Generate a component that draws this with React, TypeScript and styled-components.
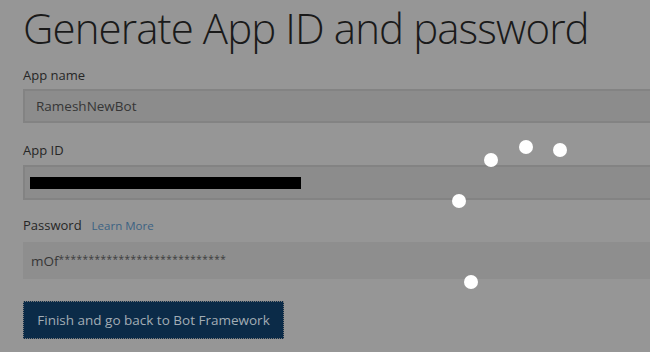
import React from "react";
import styled, { createGlobalStyle } from "styled-components";

const Global = createGlobalStyle`
  html, body { margin: 0; padding: 0; background: #969696; }
  body { font-family: "Open Sans", "Noto Sans", sans-serif; overflow: hidden; }
  * { box-sizing: border-box; }
`;

const Page = styled.div`
  position: relative;
  width: 650px;
  height: 352px;
  overflow: hidden;
  background: #969696;
`;

const Form = styled.div`
  display: flex;
  flex-direction: column;
  padding-left: 23px;
  width: 700px;
`;

const Title = styled.h1`
  margin: 0;
  font-weight: 300;
  font-size: 42px;
  line-height: 56px;
  color: #1a1a1a;
  letter-spacing: -0.9px;
  white-space: nowrap;
`;

const LabelRow = styled.div<{ $top: number }>`
  display: flex;
  align-items: baseline;
  gap: 10px;
  margin-top: ${(p) => p.$top}px;
  height: 18px;
`;

const Label = styled.span`
  font-size: 13px;
  line-height: 18px;
  color: #262626;
`;

const Link = styled.span`
  font-size: 11.5px;
  color: #3b6283;
`;

const Input = styled.div<{ $top: number; $h: number; $bordered?: boolean }>`
  display: flex;
  align-items: center;
  margin-top: ${(p) => p.$top}px;
  height: ${(p) => p.$h}px;
  padding-left: ${(p) => (p.$bordered ? 11 : 8)}px;
  background: ${(p) => (p.$bordered ? "#8c8c8c" : "#8e8e8e")};
  border: ${(p) => (p.$bordered ? "2px solid #838383" : "none")};
  font-size: 13.5px;
  color: #363636;
`;

const Redact = styled.div`
  width: 271px;
  height: 12px;
  background: #000;
  margin-left: -6px;
`;

const Stars = styled.span`
  font-size: 10px;
  letter-spacing: 0.48px;
  color: #3c3c3c;
  align-self: center;
  margin-top: -3px;
`;

const Button = styled.button`
  margin-top: 22px;
  width: 261px;
  height: 38px;
  padding: 0;
  background: #0b2b48;
  border: 1px dotted #7a7a7a;
  color: #a3adb5;
  font-family: "Open Sans", "Noto Sans", sans-serif;
  font-size: 13.5px;
  cursor: pointer;
`;

const Overlay = styled.div`
  position: absolute;
  inset: 0;
  pointer-events: none;
`;

const Dot = styled.div`
  position: absolute;
  width: 14px;
  height: 14px;
  border-radius: 50%;
  background: #ffffff;
  transform: translate(-50%, -50%);
`;

const dots = [
  [491, 160],
  [526, 147],
  [560, 150],
  [459, 201],
  [471, 282],
];

export default function App() {
  return (
    <Page>
      <Global />
      <Form>
        <Title>Generate App ID and password</Title>
        <LabelRow $top={10}>
          <Label>App name</Label>
        </LabelRow>
        <Input $top={5} $h={34} $bordered>
          RameshNewBot
        </Input>
        <LabelRow $top={18}>
          <Label>App ID</Label>
        </LabelRow>
        <Input $top={6} $h={35} $bordered>
          <Redact />
        </Input>
        <LabelRow $top={16}>
          <Label>Password</Label>
          <Link>Learn More</Link>
        </LabelRow>
        <Input $top={8} $h={37}>
          mOf<Stars>****************************</Stars>
        </Input>
        <Button>Finish and go back to Bot Framework</Button>
      </Form>
      <Overlay>
        {dots.map(([x, y], i) => (
          <Dot key={i} style={{ left: x, top: y }} />
        ))}
      </Overlay>
    </Page>
  );
}
